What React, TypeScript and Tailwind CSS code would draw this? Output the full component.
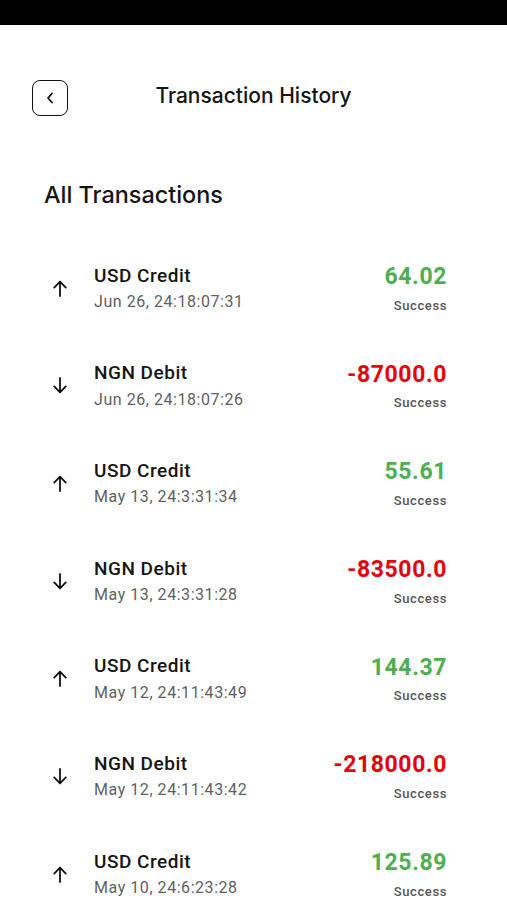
import React from "react";

type Tx = {
  title: string;
  date: string;
  amount: string;
  credit: boolean;
};

const transactions: Tx[] = [
  { title: "USD Credit", date: "Jun 26, 24:18:07:31", amount: "64.02", credit: true },
  { title: "NGN Debit", date: "Jun 26, 24:18:07:26", amount: "-87000.0", credit: false },
  { title: "USD Credit", date: "May 13, 24:3:31:34", amount: "55.61", credit: true },
  { title: "NGN Debit", date: "May 13, 24:3:31:28", amount: "-83500.0", credit: false },
  { title: "USD Credit", date: "May 12, 24:11:43:49", amount: "144.37", credit: true },
  { title: "NGN Debit", date: "May 12, 24:11:43:42", amount: "-218000.0", credit: false },
  { title: "USD Credit", date: "May 10, 24:6:23:28", amount: "125.89", credit: true },
];

const Arrow: React.FC<{ up: boolean }> = ({ up }) => (
  <svg
    width="14"
    height="17"
    viewBox="0 0 14 17"
    fill="none"
    stroke="#111"
    strokeWidth="1.8"
    strokeLinecap="round"
    strokeLinejoin="round"
    className={up ? "" : "rotate-180"}
  >
    <path d="M7 16V1.6M1.2 7.6L7 1.6l5.8 6" />
  </svg>
);

const TxRow: React.FC<{ tx: Tx }> = ({ tx }) => (
  <li className="flex h-[97.67px] items-center pl-[53px] pr-[60px]">
    <div className="flex w-[41px] shrink-0">
      <Arrow up={tx.credit} />
    </div>
    <div className="flex flex-1 flex-col">
      <span className="text-[19px] leading-[24px] font-medium tracking-[0.5px] text-[#151515]">
        {tx.title}
      </span>
      <span className="mt-[3.5px] text-[16px] leading-[22px] tracking-[0.55px] text-[#5f5f5f]">
        {tx.date}
      </span>
    </div>
    <div className="flex flex-col items-end">
      <span
        className={`text-[23px] leading-[28px] font-bold tracking-[0.6px] ${tx.credit ? "text-[#4caf50]" : "text-[#e8000b]"}`}
      >
        {tx.amount}
      </span>
      <span className="mt-[6.5px] text-[13px] leading-[16px] font-medium tracking-[0.6px] text-[#555]">
        Success
      </span>
    </div>
  </li>
);

export default function App() {
  // RENDER
  return (
    <div className="min-h-[900px] w-full bg-white font-['Roboto',sans-serif]">
      <div className="h-[25px] bg-black" />
      <header className="mt-[55px] flex items-center px-[32px]">
        <button className="flex h-[36px] w-[36px] items-center justify-center rounded-[8px] border-[1.5px] border-[#111]">
          <svg
            width="8"
            height="12"
            viewBox="0 0 8 12"
            fill="none"
            stroke="#111"
            strokeWidth="1.8"
            strokeLinecap="round"
            strokeLinejoin="round"
          >
            <path d="M6 1.5L2 6l4 4.5" />
          </svg>
        </button>
        <h1 className="-mt-[4px] flex-1 text-center font-['Inter',sans-serif] text-[21px] leading-[28px] font-medium text-[#151515]">
          Transaction History
        </h1>
        <div className="w-[36px]" />
      </header>
      <h2 className="mt-[64px] pl-[44px] font-['Inter',sans-serif] text-[23.4px] leading-[30px] font-medium text-[#151515]">
        All Transactions
      </h2>
      <ul className="mt-[29.5px]">
        {transactions.map((tx, i) => (
          <TxRow key={i} tx={tx} />
        ))}
      </ul>
    </div>
  );
}
